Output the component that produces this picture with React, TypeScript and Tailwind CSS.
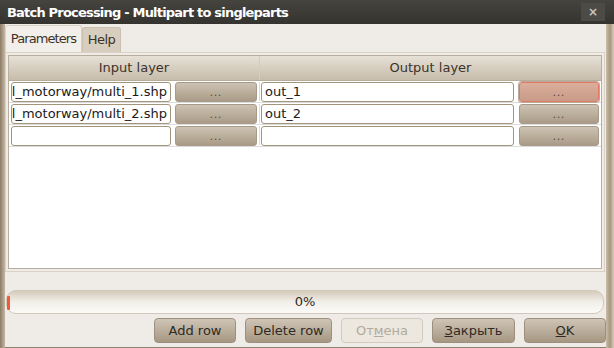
import React from 'react';

const font = "font-['DejaVu_Sans',sans-serif]";

const DotsButton: React.FC<{ hot?: boolean }> = ({ hot }) => (
  <div
    className={`h-[20px] rounded-[3px] border flex items-end justify-center pb-[3px] text-[10px] leading-none text-[#4a4236] tracking-[1px] ${
      hot
        ? 'border-[#e07a62] bg-gradient-to-b from-[#dcae9c] to-[#c79b88] shadow-[0_0_0_1px_#b9a99a]'
        : 'border-[#a89a88] bg-gradient-to-b from-[#cdc3b4] to-[#a99b86]'
    }`}
  >
    ...
  </div>
);

const Field: React.FC<{ text?: string; end?: boolean }> = ({ text, end }) => (
  <div
    className={`h-[20px] bg-white border border-[#a3957c] rounded-[3px] flex items-center overflow-hidden ${
      end ? 'justify-end pr-[3px]' : 'justify-start pl-[3px]'
    }`}
  >
    <span className="whitespace-nowrap text-[13px] text-[#1a1a1a] shrink-0">{text}</span>
  </div>
);

const Btn: React.FC<{ children: React.ReactNode; disabled?: boolean; w: string }> = ({ children, disabled, w }) => (
  <div
    className={`${w} h-[25px] rounded-[4px] border flex items-center justify-center text-[13px] ${
      disabled
        ? 'border-[#d3cabd] bg-[#ece7df] text-[#b3aa9c]'
        : 'border-[#9e9080] bg-gradient-to-b from-[#cfc5b6] to-[#a69782] text-[#2e2a24]'
    }`}
  >
    {children}
  </div>
);

export default function App() {
  const rows = [
    { input: 'data/roads/al_motorway/multi_1.shp', output: 'out_1', hot: true },
    { input: 'data/roads/al_motorway/multi_2.shp', output: 'out_2' },
    { input: '', output: '' },
  ];
  return (
    <div className={`w-[614px] h-[348px] flex flex-col bg-[#2f2e2a] overflow-hidden ${font}`}>
      {/* title bar */}
      <div className="h-[24px] flex items-center justify-between bg-gradient-to-b from-[#45443f] to-[#34332f] pl-[7px] pr-[9px]">
        <span className="text-white font-bold text-[13px] leading-none tracking-[-0.8px]">
          Batch Processing - Multipart to singleparts
        </span>
        <div className="w-[24px] h-[18px] bg-[#4c4b46] flex items-center justify-center text-[#c8c6c0] text-[12px] font-bold leading-none">
          ×
        </div>
      </div>

      <div className="flex-1 flex">
        {/* left frame */}
        <div className="w-[5px] bg-gradient-to-r from-[#8c7c66] to-[#c4b7a4]" />
        <div className="flex-1 flex flex-col bg-[#efebe6] border-b border-[#8a8070]">
          {/* tabs */}
          <div className="h-[28px] flex items-end">
            <div className="h-[27px] w-[77px] bg-[#f2efea] border border-b-0 border-[#d9d1c5] rounded-t-[3px] flex items-center justify-center text-[13px] tracking-[-0.9px] text-[#3c3328] z-10">
              Parameters
            </div>
            <div className="h-[25px] w-[39px] bg-[#d8cebf] border border-b-0 border-[#cbbfae] rounded-t-[3px] flex items-center justify-center text-[13px] tracking-[-0.5px] text-[#3c3328]">
              Help
            </div>
          </div>
          {/* pane */}
          <div className="h-[220px] mr-[1px] border border-[#d9d1c5] bg-[#efebe6] p-[2px]">
            <div className="h-full bg-white border border-[#b9ae9d] flex flex-col">
              <div className="h-[25px] flex bg-gradient-to-b from-[#e6e0d6] to-[#c7bcab] border-b border-[#b8ad9c] text-[13px] text-[#3c3328]">
                <div className="w-[251px] flex items-center justify-center border-r border-[#d5ccbf]">Input layer</div>
                <div className="flex-1 flex items-center justify-center">Output layer</div>
              </div>
              {rows.map((r, i) => (
                <div key={i} className="h-[22px] flex border-b border-[#dcdcdc] py-[1px]">
                  <div className="w-[251px] flex gap-[4px] pl-[2px] pr-[2px] border-r border-[#dcdcdc]">
                    <div className="w-[160px]">
                      <Field text={r.input} end={!!r.input} />
                    </div>
                    <div className="flex-1">
                      <DotsButton />
                    </div>
                  </div>
                  <div className="flex-1 flex gap-[5px] pl-[1px] pr-[2px]">
                    <div className="w-[253px]">
                      <Field text={r.output} />
                    </div>
                    <div className="flex-1">
                      <DotsButton hot={r.hot} />
                    </div>
                  </div>
                </div>
              ))}
            </div>
          </div>
          {/* progress */}
          <div className="mt-[18px] h-[24px] mr-[2px] ml-[1px] rounded-[10px] border border-[#d2c8b9] bg-gradient-to-b from-[#d6cbbb] via-[#f2efe9] to-[#fbfaf8] flex items-center justify-center relative text-[13px] text-[#2e2a24]">
            <div className="absolute left-[0px] top-[5px] w-[3px] h-[14px] bg-[#ee5a3c] rounded-[1px]" />
            0%
          </div>
          {/* buttons */}
          <div className="mt-[4px] flex justify-end gap-[9px]">
            <Btn w="w-[82px]">Add row</Btn>
            <Btn w="w-[87px]">Delete row</Btn>
            <Btn w="w-[82px]" disabled>
              От<span className="underline">м</span>ена
            </Btn>
            <Btn w="w-[83px]">
              <span className="underline">З</span>акрыть
            </Btn>
            <Btn w="w-[82px]">
              <span className="underline">O</span>K
            </Btn>
          </div>
        </div>
        {/* right frame */}
        <div className="w-[8px] bg-gradient-to-r from-[#c9bdaa] via-[#a8977f] to-[#d7ccbb]" />
      </div>
    </div>
  );
}
